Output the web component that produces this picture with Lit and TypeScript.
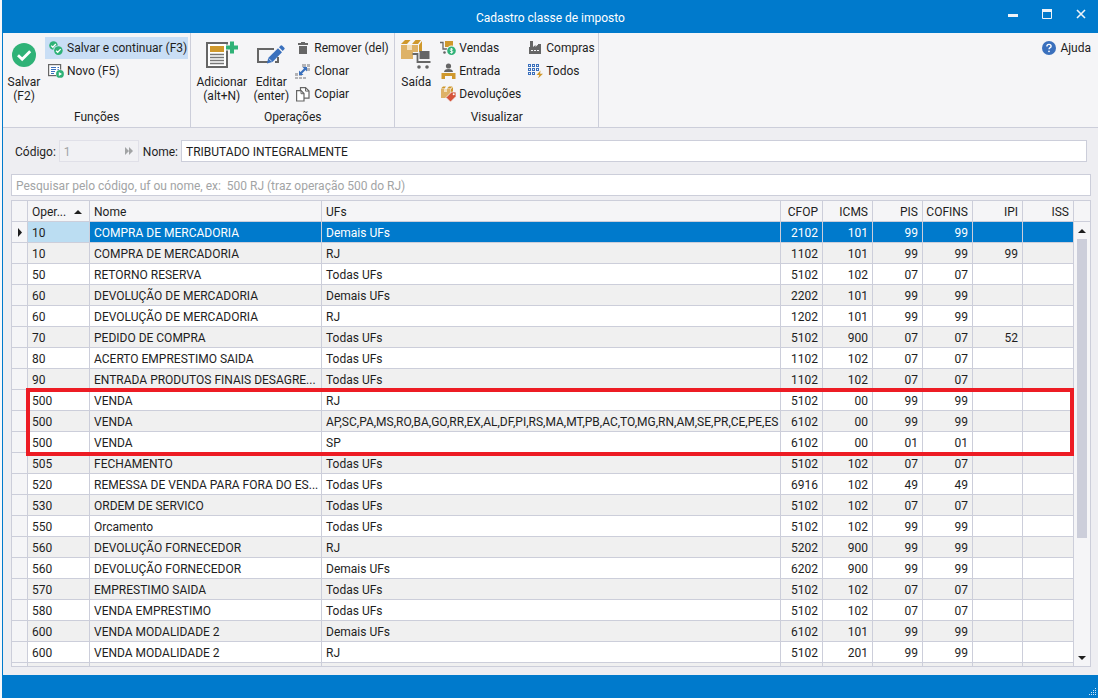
import { LitElement, html, svg, css } from "lit";
import { classMap } from "lit/directives/class-map.js";

type Row = [string, string, string, string, string, string, string, string, string];

const ROWS: Row[] = [
  ["10", "COMPRA DE MERCADORIA", "Demais UFs", "2102", "101", "99", "99", "", ""],
  ["10", "COMPRA DE MERCADORIA", "RJ", "1102", "101", "99", "99", "99", ""],
  ["50", "RETORNO RESERVA", "Todas UFs", "5102", "102", "07", "07", "", ""],
  ["60", "DEVOLUÇÃO DE MERCADORIA", "Demais UFs", "2202", "101", "99", "99", "", ""],
  ["60", "DEVOLUÇÃO DE MERCADORIA", "RJ", "1202", "101", "99", "99", "", ""],
  ["70", "PEDIDO DE COMPRA", "Todas UFs", "5102", "900", "07", "07", "52", ""],
  ["80", "ACERTO EMPRESTIMO SAIDA", "Todas UFs", "1102", "102", "07", "07", "", ""],
  ["90", "ENTRADA PRODUTOS FINAIS DESAGRE...", "Todas UFs", "1102", "102", "07", "07", "", ""],
  ["500", "VENDA", "RJ", "5102", "00", "99", "99", "", ""],
  ["500", "VENDA", "AP,SC,PA,MS,RO,BA,GO,RR,EX,AL,DF,PI,RS,MA,MT,PB,AC,TO,MG,RN,AM,SE,PR,CE,PE,ES", "6102", "00", "99", "99", "", ""],
  ["500", "VENDA", "SP", "6102", "00", "01", "01", "", ""],
  ["505", "FECHAMENTO", "Todas UFs", "5102", "102", "07", "07", "", ""],
  ["520", "REMESSA DE VENDA PARA FORA DO ES...", "Todas UFs", "6916", "102", "49", "49", "", ""],
  ["530", "ORDEM DE SERVICO", "Todas UFs", "5102", "102", "07", "07", "", ""],
  ["550", "Orcamento", "Todas UFs", "5102", "102", "99", "99", "", ""],
  ["560", "DEVOLUÇÃO FORNECEDOR", "RJ", "5202", "900", "99", "99", "", ""],
  ["560", "DEVOLUÇÃO FORNECEDOR", "Demais UFs", "6202", "900", "99", "99", "", ""],
  ["570", "EMPRESTIMO SAIDA", "Todas UFs", "5102", "102", "07", "07", "", ""],
  ["580", "VENDA EMPRESTIMO", "Todas UFs", "5102", "102", "07", "07", "", ""],
  ["600", "VENDA MODALIDADE 2", "Demais UFs", "6102", "101", "99", "99", "", ""],
  ["600", "VENDA MODALIDADE 2", "RJ", "5102", "201", "99", "99", "", ""],
  ["", "", "", "", "", "", "", "", ""],
];

const icon = (w: number, h: number, body: unknown) =>
  html`<svg width=${w} height=${h} viewBox="0 0 ${w} ${h}" aria-hidden="true">${body}</svg>`;

const check = icon(24, 24, svg`<circle cx="12" cy="12" r="12" fill="#2fb277"/><path d="M6 12.2l4.2 4.1 8-8.1" fill="none" stroke="#fff" stroke-width="2.8"/>`);
const checks = icon(14, 14, svg`<circle cx="4.5" cy="4.5" r="4.3" fill="#2fb277"/><path d="M2.2 4.6l1.6 1.6 3-3.2" fill="none" stroke="#fff" stroke-width="1.3"/><circle cx="9.2" cy="9.4" r="5" fill="#c9def5"/><circle cx="9.4" cy="9.6" r="4.3" fill="#2fb277"/><path d="M7.1 9.7l1.6 1.6 3-3.2" fill="none" stroke="#fff" stroke-width="1.3"/>`);
const novo = icon(16, 14, svg`<rect x=".6" y=".6" width="12" height="11" fill="#fff" stroke="#666" stroke-width="1.2"/><path d="M3 3.5h5M3 5.5h5M3 7.5h4M3 9.5h3M9.5 3.5h1.500M9.500 5.5h1.500" stroke="#3a70bd"/><circle cx="12" cy="9.800" r="4.300" fill="#f5f5f7"/><circle cx="12" cy="9.900" r="3.900" fill="#2fb277"/><path d="M10.800 7.900v4l3.200-2z" fill="#fff"/>`);
const adicionar = icon(32, 28, svg`<rect x="1" y="2" width="20" height="24" fill="#fff" stroke="#666" stroke-width="2"/><rect x="4" y="5" width="14" height="6" fill="#cf982c"/><path d="M4 13.500h14M4 16.500h14M4 19.500h14M4 22.500h14" stroke="#777" stroke-width="1.400"/><path d="M26 0v13M20 6.500h12" stroke="#f5f5f7" stroke-width="6"/><path d="M26 .5v12M20 6.500h12" stroke="#2fb277" stroke-width="4"/>`);
const editar = icon(28, 20, svg`<path d="M17 4H1v13h10M21 12v5h-3" fill="none" stroke="#666" stroke-width="2"/><path d="M10 18.500l1.200-5.500L21 3.200l4 4L15.500 17z" fill="#3a70bd"/><path d="M22 2.200l1.700-1.700q.8-.6 1.600.2l2 2q.8.8 0 1.600l-1.600 1.700z" fill="#3a70bd"/><path d="M11.800 13.500l3 3" stroke="#f5f5f7" stroke-width=".8"/>`);
const remover = icon(14, 14, svg`<path d="M2 2h3V1h4v1h3v2H2z M3 5h8v8H3z" fill="#666"/>`);
const clonar = icon(16, 16, svg`<path d="M0 10h3v3H0zM4 10h3v3H4zM0 14h3v2H0zM4 14h3v2H4zM8 14h3v2H8zM7 1h4v3H7zM12 1h3v3h-3zM12 5h3v3h-3z" fill="#b3b3b6"/><path d="M4 12V7.500l1.500 1.500L9 5.500 7.500 4H12v4.500L10.500 7 7 10.500 8.500 12z" fill="#3a70bd"/>`);
const copiar = icon(14, 15, svg`<path d="M4.500.600h5l3.500 3.500v7H4.500z" fill="#fff" stroke="#666" stroke-width="1.200"/><path d="M9.500.600v3.500H13" fill="none" stroke="#666"/><path d="M.600 3.600h4.500L8 6.500v7.500H.600z" fill="#fff" stroke="#666" stroke-width="1.200"/><path d="M5 3.600v3.100h3" fill="none" stroke="#666"/>`);
const saida = icon(30, 32, svg`<path d="M0 6h17v14H0z" fill="#deb267"/><path d="M6 6h5v5H6z" fill="#f3dfbb"/><path d="M0 5l4-4h5.500L6 5zM11 5l3.500-4H20l-3 4zM18 6l3-4v14l-3 4z" fill="#cf982c"/><path d="M12 13h18v16H12z" fill="#f5f5f7"/><path d="M18.500 12h10v8h-10z" fill="#666"/><path d="M11.500 15h5v8h13" fill="none" stroke="#666" stroke-width="1.800"/><circle cx="18" cy="28" r="1.800" fill="#666"/><circle cx="26" cy="28" r="1.800" fill="#666"/>`);
const vendas = icon(16, 16, svg`<path d="M0 2.500h3V9h8" fill="none" stroke="#666" stroke-width="1.300"/><path d="M5 1h8v6H5z" fill="#cf982c"/><circle cx="4.500" cy="12.500" r="1.300" fill="#666"/><circle cx="11.500" cy="10.500" r="4.900" fill="#f5f5f7"/><circle cx="11.500" cy="10.800" r="4.300" fill="#2fb277"/><path d="M13 9.300q-3-1-3 .3t1.500 1.200 1.500 1.200-3 .500M11.500 8v5.600" fill="none" stroke="#fff" stroke-width=".8"/>`);
const entrada = icon(15, 16, svg`<circle cx="7.500" cy="3" r="2.600" fill="#666"/><path d="M3 9q.2-3 4.500-3T12 9z" fill="#666"/><path d="M.500 10h14v6H11v-3H4v3H.500z" fill="#cf982c"/>`);
const devolucoes = icon(15, 16, svg`<path d="M0 3h9v9H0z" fill="#deb267"/><path d="M3 3h3v3H3z" fill="#f3dfbb"/><path d="M0 2.500L2 .500h3L3.500 2.500zM6 2.500l2-2h3.500L9.500 2.500zM9.600 3.500L12 1v7L9.600 10.500z" fill="#cf982c"/><path d="M5 11.500L10.500 6H15v4.500L9.500 16z" fill="#d5543a" stroke="#f5f5f7" stroke-width=".8"/><circle cx="12.700" cy="8.300" r="1" fill="#fff"/>`);
const compras = icon(14, 14, svg`<path d="M2 0h3v6l2.500-2v2l2-2H10V3h3v10H1V6h1z" fill="#666"/><path d="M3 9h2v1H3zM6 9h2v1H6zM9 9h2v1H9z" fill="#f5f5f7"/>`);
const todos = icon(15, 14, svg`<g fill="none" stroke="#3a70bd">${[0, 1, 2].map((r) => [0, 1, 2].map((c) => (r === 2 && c === 2 ? "" : svg`<rect x=${c * 4 + 0.5} y=${r * 4 + 0.5} width="2" height="2"/>`)))}</g><path d="M12.500 6.500L8.500 11h2.800L10 14.500l5-4.700h-2.900z" fill="#cf982c"/>`);
const ajuda = icon(14, 14, svg`<circle cx="7" cy="7" r="7" fill="#3a70bd"/><path d="M4.900 5.400q0-2 2.100-2t2.100 1.800q0 .9-1 1.500T7 8.300" fill="none" stroke="#fff" stroke-width="1.400"/><circle cx="7" cy="10.300" r=".9" fill="#fff"/>`);

class AppRoot extends LitElement {
  static styles = css`
    :host {
      display: flex;
      box-sizing: border-box;
      height: 100vh;
      padding-left: 2px;
      background: #f7f8fa;
      color: #1e1e1e;
      font: 12px/14px Roboto, "Open Sans", sans-serif;
    }
    * { box-sizing: border-box; }
    svg { display: block; flex: none; }
    button, input { font: inherit; color: inherit; margin: 0; }
    button { border: 0; background: none; padding: 0; }
    .window {
      flex: 1;
      min-width: 0;
      display: flex;
      flex-direction: column;
      background: #eeeef2;
      border-left: 1px solid #007acc;
    }
    .title {
      display: grid;
      grid-template-columns: 1fr auto 1fr;
      align-items: center;
      height: 33px;
      background: #007acc;
      color: #fff;
    }
    .title h1 { grid-column: 2; margin: 0; padding-top: 2px; font: inherit; }
    .controls { display: flex; justify-content: flex-end; height: 28px; align-self: start; }
    .controls button { width: 34px; display: grid; place-items: center; }
    .ribbon {
      display: flex;
      height: 95px;
      background: #f5f5f7;
      border-bottom: 1px solid #ccceda;
    }
    .group { display: flex; flex-direction: column; border-right: 1px solid #ccceda; }
    .group.roomy { min-width: 204px; }
    .actions { display: flex; gap: 2px; height: 77px; padding: 4px 2px 0; }
    .caption { margin: 0; text-align: center; font: inherit; }
    .stack { display: flex; flex-direction: column; align-items: flex-start; gap: 1px; }
    .big {
      display: flex;
      flex-direction: column;
      align-items: center;
      height: 73px;
      min-width: 38px;
      text-align: center;
    }
    .big .pic { display: grid; place-items: center; height: 38px; padding-bottom: 2px; }
    .big.wide { min-width: 57px; }
    .small { display: flex; align-items: center; height: 22px; gap: 3px; padding: 0 1px 0 3px; white-space: nowrap; }
    .small .pic { display: grid; place-items: center; width: 16px; }
    .hot { background: #c9def5; }
    .help { margin: 4px 6px 0 auto; color: inherit; text-decoration: none; }
    .body { flex: 1; min-height: 0; display: flex; flex-direction: column; padding: 12px 7px 8px 8px; }
    .fields { display: flex; align-items: center; padding: 0 4px 0 1px; }
    .fields label { margin: 0 3px; padding-top: 1px; }
    .fields .code { display: flex; align-items: center; width: 80px; height: 22px; margin-right: 1px; border: 1px solid #e0e0e8; background: #f1f1f4; }
    .code input { flex: 1; min-width: 0; border: 0; background: none; padding: 1px 4px 0; color: #a2a4a5; }
    .code button { margin-right: 4px; }
    .box { height: 22px; border: 1px solid #ccceda; background: #fff; padding: 2px 4px 0; min-width: 0; border-radius: 0; outline: 0; }
    .fields .box { flex: 1; }
    .search { margin: 12px 0 4px; }
    .search::placeholder { color: #a2a4a5; opacity: 1; }
    .grid { flex: 1; min-height: 0; display: flex; border: 1px solid #ccceda; }
    .rows { flex: 1; min-width: 0; overflow: hidden; }
    table { width: 100%; table-layout: fixed; border-collapse: separate; border-spacing: 0; }
    th, td {
      height: 21px;
      padding: 2px 4px 0;
      border: solid #ccceda;
      border-width: 0 1px 1px 0;
      font-weight: 400;
      text-align: left;
      white-space: nowrap;
      overflow: hidden;
    }
    th { background: #f5f5f7; }
    td { background: #fff; }
    .alt td { background: #f0f0f0; }
    .ufs { padding-right: 0; }
    .num { text-align: right; padding-left: 2px; }
    td.row-head.row-head { background: #f5f5f7; padding-top: 0; }
    .on td { background: #007acc; color: #fff; }
    .on .first { background: #bbddf2; color: #1e1e1e; }
    .sort { display: flex; align-items: center; justify-content: space-between; padding-right: 3px; }
    .c-mark { width: 16px; }
    .c-op { width: 62px; }
    .c-name { width: 232px; }
    .c-cfop { width: 42px; }
    .c-n { width: 50px; }
    .c-iss { width: 51px; }
    .framed { position: relative; }
    .framed::after {
      content: "";
      position: absolute;
      inset: -2px 0 -3px 14px;
      border: 4px solid #ed1c24;
      pointer-events: none;
    }
    .scroll { width: 16px; display: flex; flex-direction: column; align-items: center; background: #f5f5f7; }
    .corner { align-self: stretch; height: 21px; border-bottom: 1px solid #ccceda; }
    .scroll button { width: 16px; height: 17px; display: grid; place-items: center; }
    .track { flex: 1; width: 10px; }
    .thumb { height: 73%; background: #ccceda; }
    .status { height: 23px; display: flex; justify-content: flex-end; align-items: flex-end; padding: 2px 1px; background: #007acc; }
  `;

  small(pic: unknown, text: string, hot = false) {
    return html`<button class=${classMap({ small: true, hot })}><span class="pic">${pic}</span>${text}</button>`;
  }

  big(pic: unknown, text: string, key = "", wide = false) {
    return html`<button class=${classMap({ big: true, wide })}><span class="pic">${pic}</span><span>${text}</span><span>${key}</span></button>`;
  }

  row(r: Row, i: number) {
    return html`<tr class=${classMap({ on: i === 0, alt: i % 2 === 1 })}>
      <td class="row-head">${i === 0 ? icon(8, 9, svg`<path d="M2 0l4 4.500L2 9z" fill="#1e1e1e"/>`) : ""}</td>
      <td class="first">${r[0]}</td>
      <td>${r[1]}</td>
      <td class="ufs">${r[2]}</td>
      ${r.slice(3).map((v) => html`<td class="num">${v}</td>`)}
    </tr>`;
  }

  render() {
    const rows = ROWS.map((r, i) => this.row(r, i));
    return html`
      <div class="window">
        <header class="title">
          <h1>Cadastro classe de imposto</h1>
          <div class="controls">
            <button aria-label="Minimizar">${icon(10, 10, svg`<path d="M0 5h10v3H0z" fill="#eef3f8"/>`)}</button>
            <button aria-label="Maximizar">${icon(10, 10, svg`<path d="M.5 1v8.500h9V1" fill="none" stroke="#eef3f8"/><path d="M0 0h10v3H0z" fill="#eef3f8"/>`)}</button>
            <button aria-label="Fechar">${icon(10, 10, svg`<path d="M1 1l8 8M9 1L1 9" stroke="#eef3f8" stroke-width="1.600"/>`)}</button>
          </div>
        </header>
        <nav class="ribbon">
          <section class="group">
            <div class="actions">
              ${this.big(check, "Salvar", "(F2)")}
              <div class="stack">
                ${this.small(checks, "Salvar e continuar (F3)", true)}
                ${this.small(novo, "Novo (F5)")}
              </div>
            </div>
            <h2 class="caption">Funções</h2>
          </section>
          <section class="group roomy">
            <div class="actions">
              ${this.big(adicionar, "Adicionar", "(alt+N)", true)}
              ${this.big(editar, "Editar", "(enter)")}
              <div class="stack">
                ${this.small(remover, "Remover (del)")}
                ${this.small(clonar, "Clonar")}
                ${this.small(copiar, "Copiar")}
              </div>
            </div>
            <h2 class="caption">Operações</h2>
          </section>
          <section class="group roomy">
            <div class="actions">
              ${this.big(saida, "Saída")}
              <div class="stack">
                ${this.small(vendas, "Vendas")}
                ${this.small(entrada, "Entrada")}
                ${this.small(devolucoes, "Devoluções")}
              </div>
              <div class="stack">
                ${this.small(compras, "Compras")}
                ${this.small(todos, "Todos")}
              </div>
            </div>
            <h2 class="caption">Visualizar</h2>
          </section>
          <a class="small help" href="#ajuda"><span class="pic">${ajuda}</span>Ajuda</a>
        </nav>
        <main class="body">
          <div class="fields">
            <label for="codigo">Código:</label>
            <span class="code">
              <input id="codigo" value="1" disabled />
              <button aria-label="Próximo" disabled>${icon(10, 8, svg`<path d="M1 0l4 4-4 4zM5 0l4 4-4 4z" fill="#a2a4a5"/>`)}</button>
            </span>
            <label for="nome">Nome:</label>
            <input id="nome" class="box" value="TRIBUTADO INTEGRALMENTE" />
          </div>
          <input class="box search" aria-label="Pesquisar" placeholder="Pesquisar pelo código, uf ou nome, ex:&nbsp; 500 RJ (traz operação 500 do RJ)" />
          <div class="grid">
            <div class="rows">
              <table>
                <colgroup>
                  <col class="c-mark" /><col class="c-op" /><col class="c-name" /><col />
                  <col class="c-cfop" /><col class="c-n" /><col class="c-n" /><col class="c-n" /><col class="c-n" /><col class="c-iss" />
                </colgroup>
                <thead>
                  <tr>
                    <th></th>
                    <th><div class="sort">Oper...${icon(8, 4, svg`<path d="M0 4l4-4 4 4z" fill="#1e1e1e"/>`)}</div></th>
                    <th>Nome</th>
                    <th>UFs</th>
                    ${["CFOP", "ICMS", "PIS", "COFINS", "IPI", "ISS"].map((t) => html`<th class="num">${t}</th>`)}
                  </tr>
                </thead>
                <tbody>${rows.slice(0, 8)}</tbody>
                <tbody class="framed">${rows.slice(8, 11)}</tbody>
                <tbody>${rows.slice(11)}</tbody>
              </table>
            </div>
            <div class="scroll">
              <div class="corner"></div>
              <button aria-label="Rolar para cima">${icon(8, 4, svg`<path d="M0 4l4-4 4 4z" fill="#1e1e1e"/>`)}</button>
              <div class="track"><div class="thumb"></div></div>
              <button aria-label="Rolar para baixo">${icon(8, 4, svg`<path d="M0 0h8L4 4z" fill="#1e1e1e"/>`)}</button>
            </div>
          </div>
        </main>
        <footer class="status">
          ${icon(8, 8, svg`<path d="M6 0h1v1H6zM4 2h1v1H4zM6 2h1v1H6zM2 4h1v1H2zM4 4h1v1H4zM6 4h1v1H6zM0 6h1v1H0zM2 6h1v1H2zM4 6h1v1H4zM6 6h1v1H6z" fill="#cfe6f7"/>`)}
        </footer>
      </div>
    `;
  }
}
customElements.define("app-root", AppRoot);
